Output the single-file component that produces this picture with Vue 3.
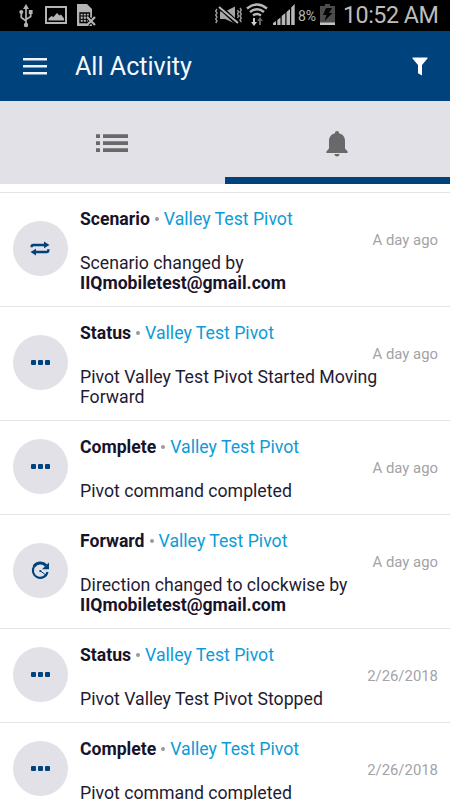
<script setup>
const items = [
  { kind: 'swap', title: 'Scenario', text: 'Scenario changed by', user: 'IIQmobiletest@gmail.com', time: 'A day ago' },
  { kind: 'dots', title: 'Status', text: 'Pivot Valley Test Pivot Started Moving Forward', time: 'A day ago' },
  { kind: 'dots', title: 'Complete', text: 'Pivot command completed', time: 'A day ago' },
  { kind: 'clock', title: 'Forward', text: 'Direction changed to clockwise by', user: 'IIQmobiletest@gmail.com', time: 'A day ago' },
  { kind: 'dots', title: 'Status', text: 'Pivot Valley Test Pivot Stopped', time: '2/26/2018' },
  { kind: 'dots', title: 'Complete', text: 'Pivot command completed', time: '2/26/2018' },
]
</script>

<template>
  <div class="screen">
    <div class="status">
      <svg class="usb" width="14" height="24" viewBox="0 0 14 24" fill="none" stroke="#b4b4b4" stroke-width="1.7">
        <path d="M7 3v18M2.3 8v5.5L7 17M11.7 8v4.5L7 15.5" />
        <path d="M7 0l3 5H4z" fill="#b4b4b4" stroke="none" />
        <circle cx="7" cy="21" r="2.2" fill="#b4b4b4" stroke="none" />
        <circle cx="2.3" cy="8" r="2" fill="#b4b4b4" stroke="none" />
        <path d="M9.8 6h3.8v4H9.8z" fill="#b4b4b4" stroke="none" />
      </svg>
      <svg class="photo" width="22" height="18" viewBox="0 0 22 18">
        <rect x="1" y="1" width="20" height="16" fill="none" stroke="#b4b4b4" stroke-width="2" />
        <path d="M3.5 14.5v-2l3-2.500 2 1L12 7l2.500 2.500 1.500-1 3 4v2z" fill="#b4b4b4" />
      </svg>
      <svg class="sim" width="19" height="22" viewBox="0 0 19 22">
        <path d="M0 0h10l5 5v17H0z" fill="#b4b4b4" />
        <path d="M3 9h9.500v9.500H3z" fill="none" stroke="#000" stroke-width="1.3" />
        <path d="M3 12h9M3 15.300h9M6.200 9v9M9.400 9v9" stroke="#000" stroke-width="1" />
        <path d="M10.500 13.500l7 7M17.500 13.500l-7 7" stroke="#000" stroke-width="4" />
        <path d="M10 13l8 8M18 13l-8 8" stroke="#b4b4b4" stroke-width="2.200" />
      </svg>
      <svg class="mute" width="27" height="19" viewBox="0 0 27 19" fill="none" stroke="#9b9b9b">
        <path d="M5 5.500h5L20 .5v17L10 13H5z" fill="#a6a6a6" stroke="none" />
        <path d="M5 1l17 16" stroke="#000" stroke-width="4.500" />
        <path d="M4 1l19 16" stroke="#b4b4b4" stroke-width="2" />
        <path d="M2 3l-1.300 2L2 7 .7 9 2 11 .7 13 2 15l-1.300 2M25 2l1.300 2L25 6l1.300 2L25 10l1.300 2L25 14l1.300 2M22.500 4l1 2-1 2 1 2-1 2" stroke-width="1.400" />
      </svg>
      <svg class="wifi" width="22" height="23" viewBox="0 0 22 23" fill="none" stroke="#b8b8b8" stroke-width="2.400">
        <path d="M1 5.500Q11-2.500 21 5.500M4 9Q11 3.500 18 9M7 12.500Q11 9.500 15 12.500" />
        <path d="M7 15h2v4h2L8 23l-3-4h2z" fill="#ccc" stroke="none" />
        <path d="M13 22h2v-4h2l-3-4-3 4h2z" fill="#666" stroke="none" />
      </svg>
      <svg class="signal" width="22" height="21" viewBox="0 0 22 21" fill="#b8b8b8">
        <path d="M0 19l3-2v4H0zM4.300 16l3.200-2.500V21H4.300zM8.700 12l3.600-3v12H8.700zM13.500 8l3.500-3v16h-3.500zM18.200 3.500L21.700 0v21h-3.500z" />
      </svg>
      <span class="percent">8%</span>
      <svg class="battery" width="15" height="21" viewBox="0 0 15 21">
        <path d="M0 2h5V0h5v2h5v19H0z" fill="#4c4c4c" />
        <path d="M0 18.500h15V21H0z" fill="#c4c4c4" />
        <path d="M6 4h6l-3 5h3.500L4.500 17l2-6H3z" fill="#050505" />
      </svg>
      <span class="clock">10:52 AM</span>
    </div>

    <header class="bar">
      <svg class="menu" width="24" height="17" viewBox="0 0 24 17" fill="#eef2f7">
        <path d="M0 0h24v2.600H0zM0 7h24v2.600H0zM0 14h24v2.600H0z" />
      </svg>
      <h1>All Activity</h1>
      <svg class="filter" width="16" height="19" viewBox="0 0 16 19">
        <path d="M.5 .5h15v1L10 8v10.500L6 16.300V8L.5 1.500z" fill="#fff" />
      </svg>
    </header>

    <nav class="tabs">
      <div class="tab">
        <svg width="32" height="19" viewBox="0 0 32 19" fill="#69696b">
          <path d="M0 .3h4v3.800H0zM7 .3h25v3.800H7zM0 7.300h4v3.800H0zM7 7.300h25v3.800H7zM0 14.300h4v3.800H0zM7 14.300h25v3.800H7z" />
        </svg>
      </div>
      <div class="tab active">
        <svg width="22" height="26" viewBox="0 0 22 26" fill="#69696b">
          <path d="M11 0C9.700 0 9 .9 9 2.300 5.200 3.200 3 6 3 10v7.500L.4 20.500V22h21.200v-1.500L19 17.500V10c0-4-2.200-6.800-6-7.700C13 .9 12.300 0 11 0zM8.300 23h5.400c-.3 1.600-1.300 2.500-2.700 2.500S8.600 24.600 8.300 23z" />
        </svg>
      </div>
    </nav>

    <main class="list">
      <article v-for="(item, i) in items" :key="i" class="row">
        <div class="badge">
          <svg v-if="item.kind === 'swap'" width="20" height="15" viewBox="0 0 20 15">
            <path d="M1.700 6.200V5.500Q1.700 4 3.200 4H15M18.300 8.300v1q0 1.700-1.500 1.700H5" fill="none" stroke="#00427c" stroke-width="2.400" />
            <path d="M14 .5l5.500 3.500L14 7.200zM6 7.800L.5 11 6 14.500z" fill="#00427c" />
          </svg>
          <svg v-else-if="item.kind === 'clock'" width="19" height="19" viewBox="0 0 19 19">
            <path d="M3.200 5.200A7.400 7.400 0 1 0 16.500 11" fill="none" stroke="#00427c" stroke-width="2.100" />
            <path d="M3 5.600A7.400 7.400 0 0 1 15 4.500" fill="none" stroke="#00427c" stroke-width="3" />
            <path d="M18 1.500v6.800h-7z" fill="#00427c" />
            <path d="M9.500 10l6 4.500" stroke="#00427c" stroke-width="1" />
            <circle cx="9.300" cy="10" r="1.100" fill="#00427c" />
          </svg>
          <svg v-else width="19" height="5" viewBox="0 0 19 5" fill="#00427c">
            <rect width="5" height="5" rx="1" />
            <rect x="7" width="5" height="5" rx="1" />
            <rect x="14" width="5" height="5" rx="1" />
          </svg>
        </div>
        <div class="content">
          <div class="title"><b>{{ item.title }}</b><i class="sep"></i><span class="link">Valley Test Pivot</span></div>
          <div class="text">{{ item.text }}<b v-if="item.user">{{ item.user }}</b></div>
        </div>
        <time>{{ item.time }}</time>
      </article>
    </main>
  </div>
</template>

<style>
body { background: #fff; }
</style>

<style scoped>
.screen {
  width: 450px;
  height: 800px;
  overflow: hidden;
  display: flex;
  flex-direction: column;
  font-family: Roboto, "Liberation Sans", sans-serif;
  background: #fff;
}
svg { display: block; flex: none; }
.status {
  flex: none;
  height: 31px;
  box-sizing: border-box;
  display: flex;
  align-items: flex-start;
  padding-left: 19px;
  background: #000;
  color: #b8b8b8;
  white-space: nowrap;
}
.usb { margin-top: 4px; }
.photo { margin: 6px 0 0 12px; }
.sim { margin: 4px 0 0 10px; }
.mute { margin: 6px 0 0 119px; }
.wifi { margin: 3px 0 0 4px; }
.signal { margin: 4px 0 0 5px; }
.percent { width: 22px; margin: 7px 0 0 3px; font-size: 14px; line-height: 18px; letter-spacing: -0.2px; }
.battery { margin-top: 4px; }
.clock { margin: 1px 0 0 8px; font-size: 23.3px; line-height: 28px; letter-spacing: -0.5px; color: #bdbdbd; }
.bar {
  flex: none;
  height: 70px;
  box-sizing: border-box;
  display: flex;
  align-items: center;
  padding: 0 22px 0 23px;
  background: #00427c;
}
h1 {
  flex: 1;
  margin: 2px 0 0 28px;
  font-size: 25.1px;
  line-height: 32px;
  font-weight: 400;
  color: #f6f9fc;
}
.tabs { flex: none; display: flex; height: 83px; background: #e2e1e7; }
.tab {
  flex: 1;
  height: 83px;
  box-sizing: border-box;
  display: flex;
  justify-content: center;
  align-items: center;
  border-bottom: 7px solid transparent;
  padding-top: 9px;
}
.tab svg { margin-right: 0.5px; }
.tab.active { border-bottom-color: #00427c; }
.list { padding-top: 8px; }
.row {
  display: flex;
  box-sizing: border-box;
  border-top: 1px solid #e4e4e6;
  padding: 0 12px 0 12.5px;
}
.badge {
  flex: none;
  align-self: center;
  width: 55px;
  height: 55px;
  margin-bottom: 2px;
  border-radius: 50%;
  background: #e2e1e7;
  display: flex;
  align-items: center;
  justify-content: center;
}
.content {
  flex: none;
  width: 310px;
  margin-left: 12.5px;
  padding: 16px 0 13px;
  font-size: 17.7px;
  line-height: 20px;
  color: #1f1b33;
}
.title { display: flex; align-items: center; margin-bottom: 24px; white-space: nowrap; }
.sep { width: 4px; height: 4px; border-radius: 50%; background: #9a9a9c; margin: 0 5px; }
.link { color: #0d9bd8; }
b { font-weight: 700; font-size: 17.6px; color: #17132b; }
.text b { display: block; }
time {
  margin: 37px 0 0 -30px;
  flex: 1;
  text-align: right;
  font-size: 14.9px;
  line-height: 20px;
  color: #a3a3a8;
  white-space: nowrap;
}
</style>
